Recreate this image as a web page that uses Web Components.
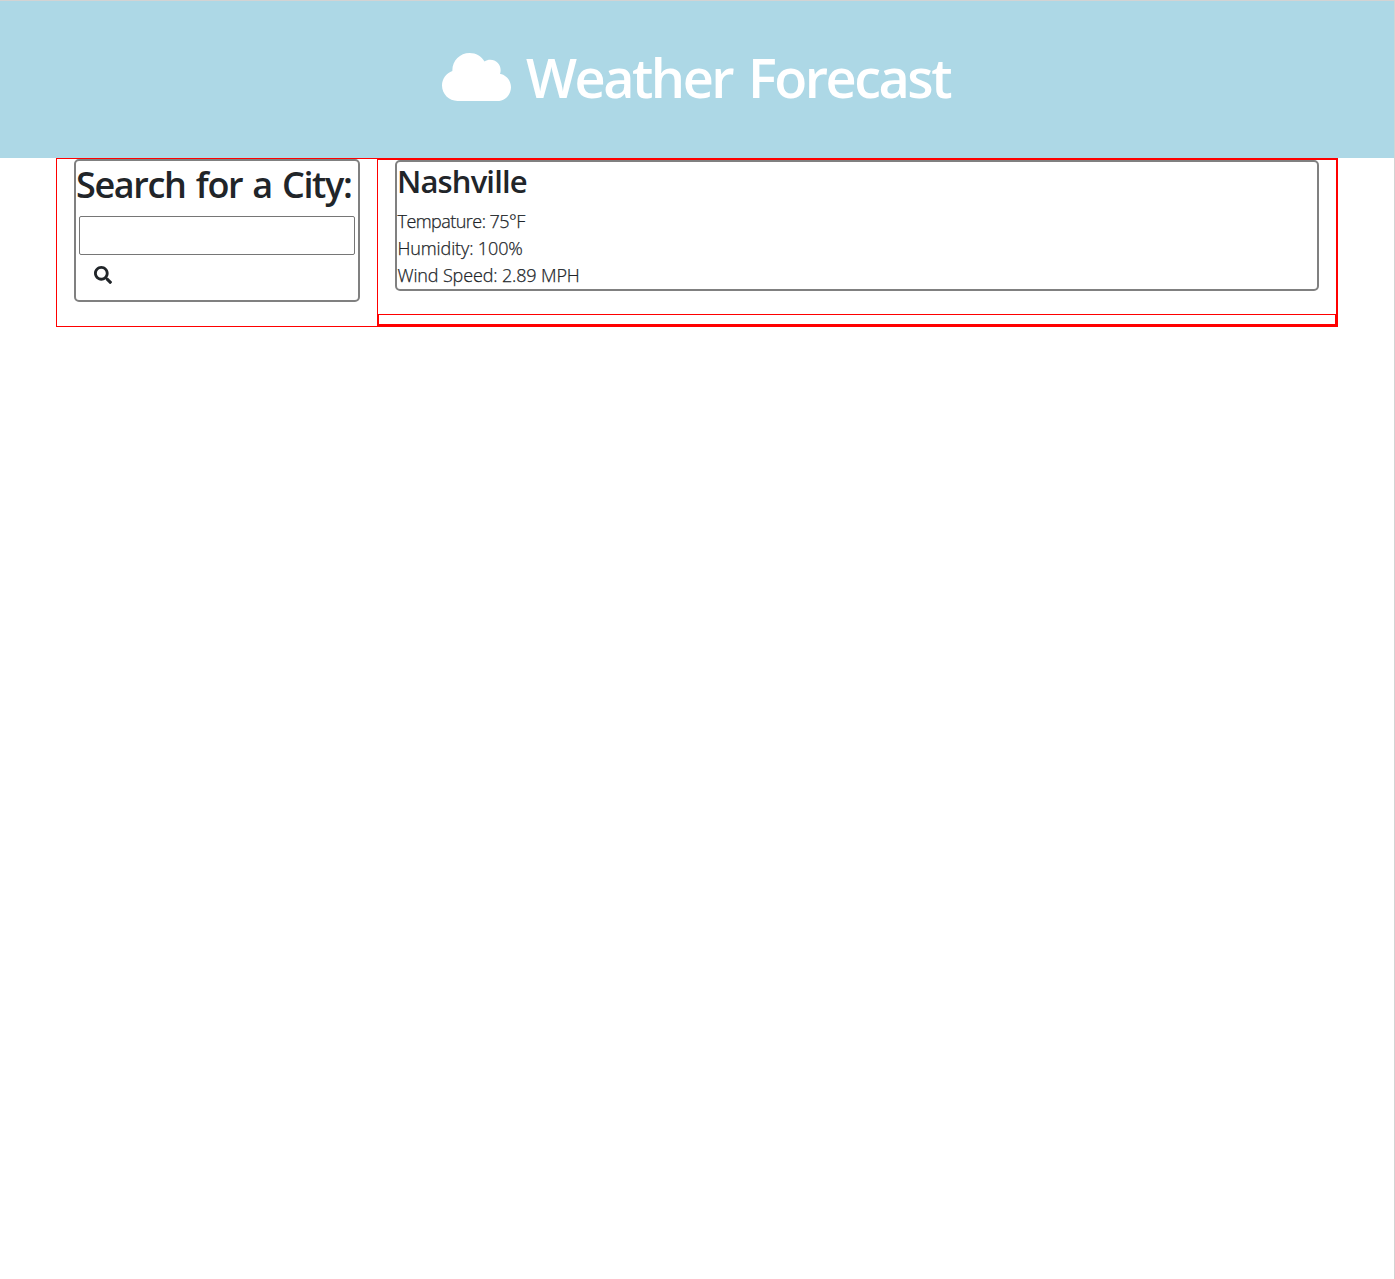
<!DOCTYPE html>
<html lang="en">
<head>
<meta charset="utf-8">
<title>Weather Forecast</title>
<style>
*{box-sizing:border-box}
html,body{margin:0;height:100%}
body{background:#fff;color:#212529;font:400 18px/27px "Open Sans","Noto Sans",sans-serif;overflow:hidden}
</style>
</head>
<body>
<weather-app></weather-app>
<script>
const define=(name,html)=>customElements.define(name,class extends HTMLElement{
  constructor(){
    super();
    this.attachShadow({mode:'open'}).innerHTML='<style>*,:host{box-sizing:border-box}:host{display:block}</style>'+html;
  }
});

define('page-header',`<style>
:host{display:flex;justify-content:center;align-items:center;height:157px;padding:0 2px 5px 0;background:#add8e6;color:#fff}
h1{display:flex;align-items:center;margin:0;font-size:54px;line-height:64px;font-weight:600;white-space:nowrap}
svg{width:69px;height:48px;margin-right:15px;flex:none}
span{letter-spacing:-2.5px;word-spacing:4.5px}
</style>
<h1><svg viewBox="0 32 640 448" preserveAspectRatio="none"><path fill="currentColor" d="M537.600 226.600c4.100-10.700 6.400-22.400 6.400-34.600 0-53-43-96-96-96-19.700 0-38.100 6-53.300 16.200C367 64.200 315.300 32 256 32c-88.400 0-160 71.600-160 160 0 2.700.1 5.400.2 8.100C40.200 219.800 0 273.200 0 336c0 79.500 64.500 144 144 144h368c70.700 0 128-57.300 128-128 0-61.900-44-113.600-102.400-125.400z"/></svg><span><slot></slot></span></h1>`);

define('info-card',`<style>
:host{border:2px solid gray;border-radius:5px}
</style><slot></slot>`);

define('city-search',`<style>
h2{margin:0;padding-top:2px;height:55px;font-size:36px;line-height:43px;font-weight:600;white-space:nowrap;letter-spacing:-1.35px;word-spacing:2.1px}
info-card{height:143px}
input{display:block;width:276px;height:39px;margin:0 0 0 3px;border:1px solid #767676;border-radius:2px;background:#fff;font:inherit;outline:none;padding:1px 2px}
button{display:block;border:0;background:transparent;color:#212529;padding:11px 17.500px;margin:0;line-height:0}
svg{width:18px;height:18px}
</style>
<info-card><h2>Search for a City:</h2><input type="text" aria-label="City"><button aria-label="Search"><svg viewBox="0 0 512 512"><path fill="currentColor" d="M505 442.700L405.300 343c-4.500-4.500-10.600-7-17-7H372c27.600-35.300 44-79.700 44-128C416 93.100 322.900 0 208 0S0 93.100 0 208s93.100 208 208 208c48.300 0 92.700-16.400 128-44v16.300c0 6.400 2.500 12.500 7 17l99.700 99.700c9.400 9.400 24.600 9.400 33.900 0l28.300-28.300c9.400-9.400 9.400-24.600.1-34zM208 336c-70.700 0-128-57.200-128-128 0-70.700 57.200-128 128-128 70.700 0 128 57.200 128 128 0 70.700-57.200 128-128 128z"/></svg></button></info-card>`);

define('current-weather',`<style>
info-card{height:131px}
h3{margin:0;height:46px;font-size:31px;line-height:38px;font-weight:600;letter-spacing:-.85px}
p{margin:0 0 0 .5px;height:27px;font-weight:300;-webkit-text-stroke:.25px currentColor;white-space:nowrap}
.temp{letter-spacing:-.54px}
.humidity{letter-spacing:-.12px}
.wind{letter-spacing:-.14px}
</style>
<info-card><h3>Nashville</h3><p class="temp">Tempature: 75°F</p><p class="humidity">Humidity: 100%</p><p class="wind">Wind Speed: 2.89 MPH</p></info-card>`);

define('weather-app',`<style>
:host{height:100vh;border-top:1px solid #d3d3d3;border-right:1px solid #d3d3d3}
main{display:flex;width:1282px;height:169px;margin-left:56px;border:1px solid red}
city-search{width:320px;padding:0 17px}
section{display:flex;flex-direction:column;flex:1;border:1px solid red}
current-weather{flex:1;padding:0 17px}
.forecast{height:11px;border:1px solid red}
</style>
<page-header>Weather Forecast</page-header>
<main><city-search></city-search><section><current-weather></current-weather><div class="forecast"></div></section></main>`);
</script>
</body>
</html>
